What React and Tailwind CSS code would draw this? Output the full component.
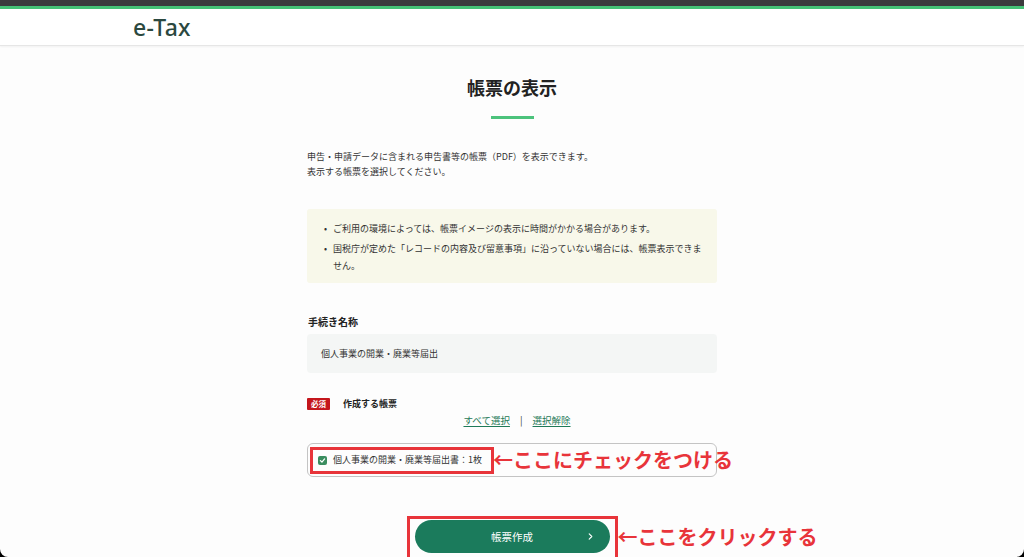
import React, { useState } from 'react';

const jp = "font-['Noto_Sans_CJK_JP',sans-serif]";

function Header() {
  return (
    <header>
      <div className="h-[6px] bg-[#3b3b3d]" />
      <div className="h-[3px] bg-[#45c276]" />
      <div className="h-[37px] bg-white border-b border-[#e6e6e6] shadow-[0_1px_2px_rgba(0,0,0,0.05)] flex items-center pl-[133px]">
        <span className="font-['Noto_Sans',sans-serif] text-[23px] font-medium leading-none tracking-[0.3px] text-[#2b4840]">
          e-Tax
        </span>
      </div>
    </header>
  );
}

function Notice() {
  const items = [
    'ご利用の環境によっては、帳票イメージの表示に時間がかかる場合があります。',
    '国税庁が定めた「レコードの内容及び留意事項」に沿っていない場合には、帳票表示できません。',
  ];
  return (
    <div className="mt-[30px] bg-[#f8f8ea] rounded-[3px] pl-[17px] pr-[9px] pt-[11px] pb-[9px] flex flex-col gap-[3px]">
      {items.map((t) => (
        <div key={t} className="flex text-[9px] leading-[17px] text-[#333]">
          <span className="w-[9px] shrink-0">•</span>
          <span>{t}</span>
        </div>
      ))}
    </div>
  );
}

function CheckIcon() {
  return (
    <span className="w-[9px] h-[9px] rounded-[2px] bg-[#3a8d5f] flex items-center justify-center shrink-0">
      <svg viewBox="0 0 10 10" className="w-[7px] h-[7px]" fill="none" stroke="white" strokeWidth="1.8" strokeLinecap="round" strokeLinejoin="round">
        <polyline points="2,5.2 4.2,7.2 8,2.8" />
      </svg>
    </span>
  );
}

export default function App() {
  const [checked, setChecked] = useState(true);

  return (
    <div className={`h-[557px] overflow-hidden bg-black ${jp}`}>
      <div className="h-full bg-[#fdfdfd] rounded-b-[8px] overflow-hidden">
        <Header />

        <main className="w-[410px] mx-auto flex flex-col">
          <h1 className="mt-[29px] text-center text-[18px] leading-[24px] font-bold text-[#222]">帳票の表示</h1>
          <div className="mt-[17px] mx-auto w-[43px] h-[3px] bg-[#4cc37c]" />

          <p className="mt-[30px] text-[9px] leading-[15px] text-[#333]">
            申告・申請データに含まれる申告書等の帳票（PDF）を表示できます。
            <br />
            表示する帳票を選択してください。
          </p>

          <Notice />

          <div className="mt-[32px] text-[10px] leading-[14px] font-bold text-[#222] pl-px">手続き名称</div>
          <div className="mt-[5px] h-[39px] bg-[#f4f6f5] rounded-[4px] flex items-center pl-[14px] text-[9px] text-[#333]">
            個人事業の開業・廃業等届出
          </div>

          <div className="mt-[25px] flex items-center h-[12px]">
            <span className="w-[23px] h-[12px] bg-[#c4161c] rounded-[1px] text-white text-[7.5px] font-bold leading-[12px] text-center">必須</span>
            <span className="ml-[13px] text-[9px] font-bold text-[#222]">作成する帳票</span>
          </div>

          <div className="mt-[3px] flex justify-center items-center gap-[10px] pl-[10px] text-[9.5px] leading-[14px]">
            <a href="#" className="text-[#1f7a58] underline underline-offset-2">すべて選択</a>
            <span className="text-[#333]">|</span>
            <a href="#" className="text-[#1f7a58] underline underline-offset-2">選択解除</a>
          </div>

          <div className="relative mt-[16px] h-[34px] border border-[#c4c4c4] rounded-[6px] flex items-center pl-[10px]">
            <label className="flex items-center gap-[6px] cursor-pointer" onClick={() => setChecked(!checked)}>
              {checked ? <CheckIcon /> : <span className="w-[9px] h-[9px] rounded-[2px] border border-[#888]" />}
              <span className="text-[9px] text-[#333]">個人事業の開業・廃業等届出書：1枚</span>
            </label>
            <div className="absolute left-[2px] top-[3px] w-[184px] h-[27px] border-[3px] border-[#e8343a] pointer-events-none" />
            <span className="absolute left-[185px] top-1/2 -translate-y-1/2 whitespace-nowrap text-[20px] font-bold leading-none text-[#e8343a]">
              ←ここにチェックをつける
            </span>
          </div>

          <div className="relative mt-[43px] mx-auto w-[195px]">
            <div className="absolute -left-[8px] -right-[8px] -top-[4px] h-[60px] border-[3px] border-[#e8343a] pointer-events-none" />
            <button className="relative w-[195px] h-[33px] rounded-full bg-[#1b7b5c] text-white text-[10.5px] flex items-center justify-center">
              帳票作成
              <svg viewBox="0 0 8 8" className="absolute right-[16px] w-[7px] h-[7px]" fill="none" stroke="white" strokeWidth="1.3" strokeLinecap="round" strokeLinejoin="round">
                <polyline points="2.5,1 5.5,4 2.5,7" />
              </svg>
            </button>
            <span className="absolute left-[203px] top-[17px] -translate-y-1/2 whitespace-nowrap text-[20px] font-bold leading-none text-[#e8343a]">
              ←ここをクリックする
            </span>
          </div>
        </main>
      </div>
    </div>
  );
}
